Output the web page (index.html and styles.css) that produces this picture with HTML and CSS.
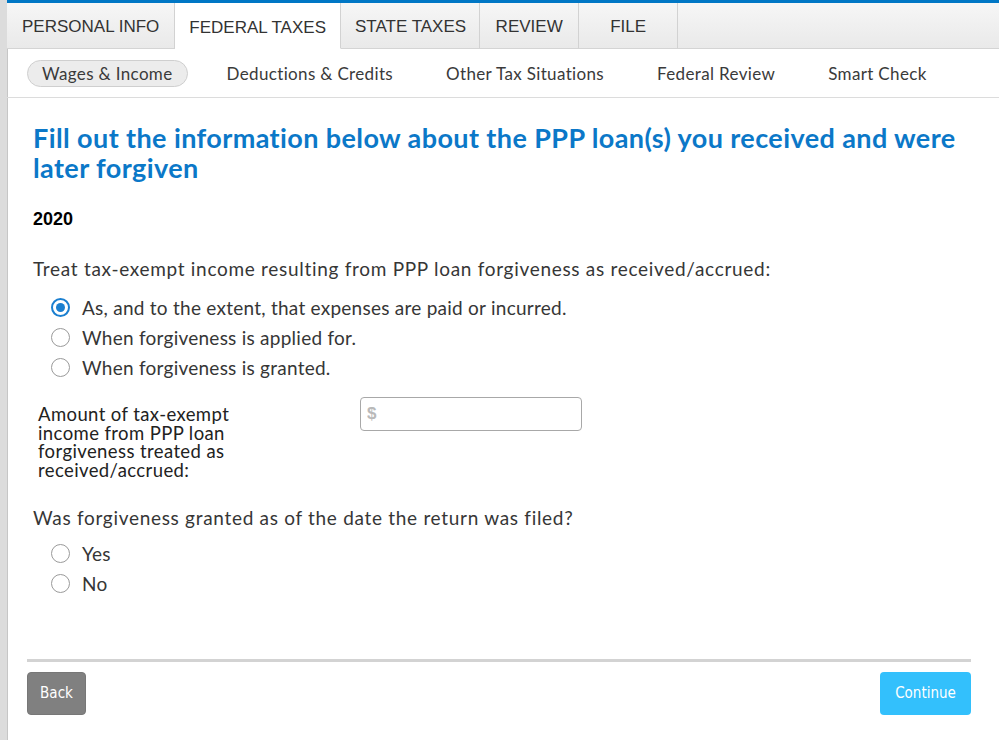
FILE: index.html
```html
<!DOCTYPE html>
<html lang="en">
<head>
    <meta charset="UTF-8">
    <title>PPP Loan Forgiveness</title>
    <link rel="stylesheet" href="styles.css">
</head>
<body>
    <div class="page">
        <div class="topbar"></div>
        <div class="tabs">
            <div class="tab">PERSONAL INFO</div>
            <div class="tab active">FEDERAL TAXES</div>
            <div class="tab">STATE TAXES</div>
            <div class="tab">REVIEW</div>
            <div class="tab">FILE</div>
            <div class="tab-fill"></div>
        </div>
        <div class="subnav">
            <span class="subnav-item current">Wages &amp; Income</span>
            <span class="subnav-item">Deductions &amp; Credits</span>
            <span class="subnav-item">Other Tax Situations</span>
            <span class="subnav-item">Federal Review</span>
            <span class="subnav-item">Smart Check</span>
        </div>

        <div class="content">
            <h1>Fill out the information below about the PPP loan(s) you received and were later forgiven</h1>
            <div class="year">2020</div>

            <p class="question">Treat tax-exempt income resulting from PPP loan forgiveness as received/accrued:</p>
            <div class="radios">
                <label class="radio"><span class="dot checked"></span>As, and to the extent, that expenses are paid or incurred.</label>
                <label class="radio"><span class="dot"></span>When forgiveness is applied for.</label>
                <label class="radio"><span class="dot"></span>When forgiveness is granted.</label>
            </div>

            <div class="amount-row">
                <div class="amount-label">Amount of tax-exempt income from PPP loan forgiveness treated as received/accrued:</div>
                <input class="amount-input" type="text" placeholder="$">
            </div>

            <p class="question q2">Was forgiveness granted as of the date the return was filed?</p>
            <div class="radios radios2">
                <label class="radio"><span class="dot"></span>Yes</label>
                <label class="radio"><span class="dot"></span>No</label>
            </div>
        </div>

        <div class="footer">
            <button class="btn back">Back</button>
            <button class="btn continue">Continue</button>
        </div>
    </div>
</body>
</html>
```

FILE: styles.css
```css
body {
    margin: 0;
    background: #fff;
    font-family: Lato, "Open Sans", sans-serif;
    color: #363636;
}
.page {
    min-height: 740px;
    border-left: 7px solid #dcdcdc;
    box-shadow: inset 1px 0 0 #c6c6c6;
}
.topbar {
    height: 3px;
    background: #0077c5;
}
.tabs {
    display: flex;
    height: 46px;
    background: linear-gradient(#f6f6f6, #e9e9e9);
}
.tab {
    font-family: "Liberation Sans", Arial, sans-serif;
    font-size: 17px;
    color: #333;
    padding: 2px 15px 0 15px;
    display: flex;
    align-items: center;
    justify-content: center;
    border-right: 1px solid #d2d2d2;
    border-bottom: 1px solid #d4d4d4;
}
.tab:nth-child(2) {
    padding: 5px 14px 0 14px;
}
.tab:nth-child(3) {
    padding: 2px 13px 0 14px;
}
.tab:nth-child(4), .tab:nth-child(5) {
    width: 68px;
}
.tab.active {
    background: #fff;
    border-bottom-color: #fff;
}
.tab-fill {
    flex: 1;
    border-bottom: 1px solid #d4d4d4;
}
.subnav {
    display: flex;
    align-items: center;
    gap: 25px;
    height: 48px;
    padding-left: 20px;
    border-bottom: 1px solid #dcdcdc;
}
.subnav-item {
    font-size: 17px;
    letter-spacing: 0.35px;
    padding: 0 13px;
    height: 25px;
    line-height: 25px;
    border: 1px solid transparent;
    border-radius: 14px;
    color: #3a3a3a;
}
.subnav-item.current {
    background: #ececec;
    border-color: #cfcfcf;
    padding: 0 14px;
}
.content {
    padding: 25px 30px 0 26px;
}
h1 {
    margin: 0;
    font-size: 27px;
    letter-spacing: 0.4px;
    line-height: 30px;
    font-weight: 700;
    color: #0b78c8;
}
.year {
    margin-top: 26px;
    font-family: "Liberation Sans", Arial, sans-serif;
    font-weight: bold;
    font-size: 18px;
    line-height: 20px;
    color: #000;
}
.question {
    margin: 28px 0 0;
    font-size: 19px;
    letter-spacing: 0.7px;
    line-height: 24px;
}
.radios {
    margin-top: 11px;
    padding-left: 18px;
}
.radio {
    display: flex;
    align-items: center;
    height: 30px;
    font-size: 19px;
    letter-spacing: 0.25px;
}
.dot {
    width: 17px;
    height: 17px;
    border: 1px solid #9a9a9a;
    border-radius: 50%;
    margin-right: 12px;
    position: relative;
    box-sizing: content-box;
}
.dot.checked {
    border: 2px solid #1a7fd0;
    width: 15px;
    height: 15px;
}
.dot.checked::after {
    content: "";
    position: absolute;
    left: 3px;
    top: 3px;
    width: 9px;
    height: 9px;
    border-radius: 50%;
    background: #1a7fd0;
}
.amount-row {
    display: flex;
    align-items: flex-start;
    margin-top: 15px;
}
.amount-label {
    width: 205px;
    margin-left: 5px;
    margin-right: 117px;
    padding-top: 8px;
    font-size: 18.5px;
    letter-spacing: 0.4px;
    line-height: 18.7px;
    color: #222;
}
.amount-input {
    width: 222px;
    height: 34px;
    box-sizing: border-box;
    border: 1px solid #a8a8a8;
    border-radius: 4px;
    padding: 0 6px;
    font-family: "Liberation Sans", Arial, sans-serif;
    font-size: 17px;
}
.amount-input::placeholder {
    color: #b9b9b9;
    font-weight: bold;
}
.q2 {
    margin-top: 26px;
}
.radios2 {
    margin-top: 9px;
}
.footer {
    margin: 60px 28px 0 20px;
    border-top: 3px solid #d3d3d3;
    padding-top: 10px;
    display: flex;
    justify-content: space-between;
}
.btn {
    height: 43px;
    border: none;
    border-radius: 4px;
    color: #fff;
    font-family: "DejaVu Sans Condensed", "DejaVu Sans", sans-serif;
    font-size: 15px;
    padding: 0 12px;
}
.back {
    background: #808080;
    width: 59px;
    border: 1px solid #777;
}
.continue {
    background: #33c0fc;
    width: 91px;
}
```
